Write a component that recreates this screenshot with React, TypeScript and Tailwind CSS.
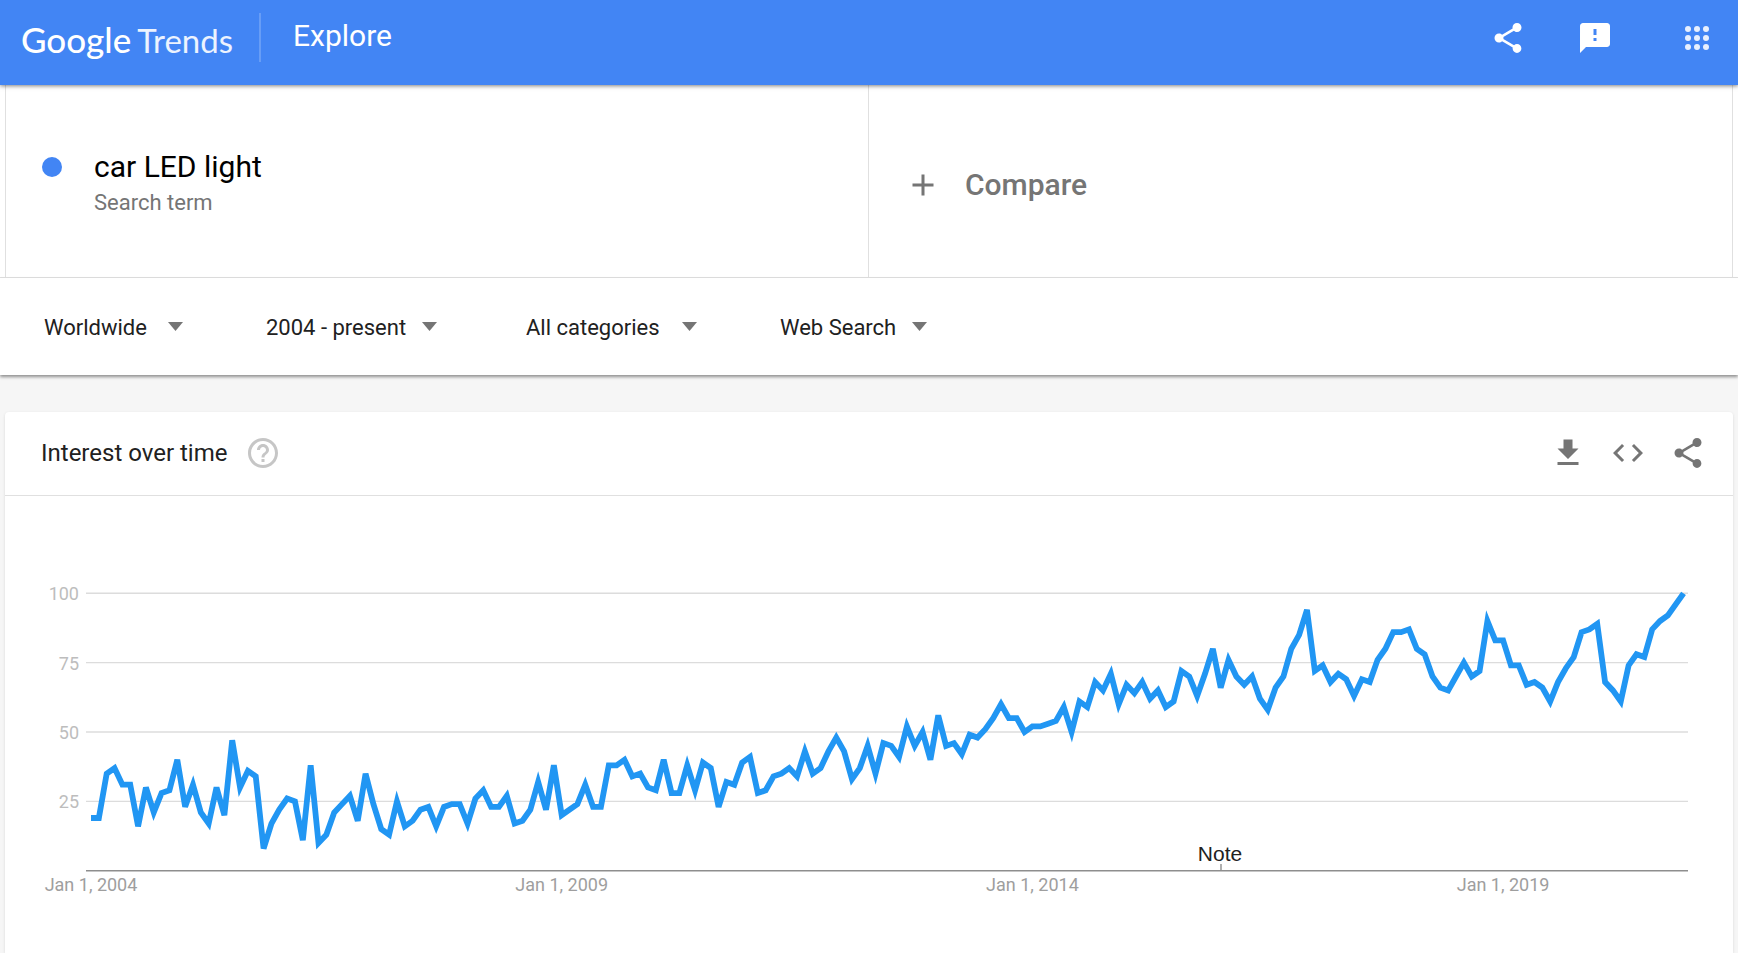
import { MdAdd, MdCode, MdFeedback, MdFileDownload, MdHelpOutline, MdShare } from "react-icons/md";

// Monthly interest, January 2004 to December 2020
const interest = [
  19, 19, 35, 37, 31, 31, 16, 30, 21, 28, 29, 40,
  23, 31, 21, 17, 30, 20, 47, 30, 36, 34, 8, 17,
  22, 26, 25, 11, 38, 10, 13, 21, 24, 27, 18, 35,
  24, 15, 13, 25, 16, 18, 22, 23, 16, 23, 24, 24,
  17, 26, 29, 23, 23, 27, 17, 18, 22, 32, 22, 38,
  20, 22, 24, 31, 23, 23, 38, 38, 40, 34, 35, 30,
  29, 40, 28, 28, 38, 29, 39, 37, 23, 32, 31, 39,
  41, 28, 29, 34, 35, 37, 34, 43, 35, 37, 43, 48,
  43, 33, 37, 45, 35, 46, 45, 41, 52, 45, 50, 40,
  56, 45, 46, 42, 49, 48, 51, 55, 60, 55, 55, 50,
  52, 52, 53, 54, 59, 50, 61, 59, 68, 65, 71, 60,
  67, 64, 68, 62, 65, 59, 61, 72, 70, 63, 71, 80,
  66, 76, 70, 67, 70, 62, 58, 66, 70, 80, 85, 94,
  72, 74, 68, 71, 69, 63, 69, 68, 76, 80, 86, 86,
  87, 80, 78, 70, 66, 65, 70, 75, 70, 72, 90, 83,
  83, 74, 74, 67, 68, 66, 61, 68, 73, 77, 86, 87,
  89, 68, 65, 61, 74, 78, 77, 87, 90, 92, 96, 100,
];

const filters = [
  { id: "geo", label: "Region", value: "Worldwide", cell: "w-[222px]", box: "w-[139px]" },
  { id: "time", label: "Time range", value: "2004 - present", cell: "w-[260px]", box: "w-[171px]" },
  { id: "category", label: "Category", value: "All categories", cell: "w-[254px]", box: "w-[171px]" },
  { id: "property", label: "Search type", value: "Web Search", cell: "w-[222px]", box: "w-[147px]" },
];

const xAxis = [
  { month: 0, label: "Jan 1, 2004" },
  { month: 60, label: "Jan 1, 2009" },
  { month: 120, label: "Jan 1, 2014" },
  { month: 180, label: "Jan 1, 2019" },
];

const toX = (month: number) => 86 + month * 7.845;
const toY = (value: number) => 374.7 - value * 2.774;

function AppsIcon() {
  return (
    <svg viewBox="0 0 24 24" className="size-6" fill="#fff" fillOpacity={0.88} aria-hidden="true">
      {[3, 12, 21].map((cy) => [3, 12, 21].map((cx) => <circle key={`${cx}-${cy}`} cx={cx} cy={cy} r={3} />))}
    </svg>
  );
}

function Header() {
  return (
    <header className="relative z-10 flex h-[85px] items-start bg-[#4285f4] px-[21px] pt-[13px] text-white shadow-[0_1px_4px_rgba(0,0,0,0.5)]">
      <a href="#" className="flex h-[49px] items-baseline gap-[6px] pt-[6px] font-['Lato',sans-serif] leading-[40px]">
        <span className="text-[35px] font-medium">Google</span>
        <span className="text-[33px] text-white/90">Trends</span>
      </a>
      <div className="ml-[26px] h-[49px] w-[2px] bg-white/20" />
      <h1 className="ml-8 pt-[5px] text-[30px] leading-[36px]">Explore</h1>
      <div className="ml-auto flex items-center pt-[7px]">
        <button type="button" aria-label="Share" className="mr-[51px]">
          <MdShare className="size-9" />
        </button>
        <button type="button" aria-label="Send feedback" className="mr-[72px]">
          <MdFeedback className="size-9" />
        </button>
        <button type="button" aria-label="Google apps" className="mr-[8px]">
          <AppsIcon />
        </button>
      </div>
    </header>
  );
}

function Terms() {
  return (
    <section className="border-b border-[#e0e0e0] bg-white px-[5px]">
      <div className="grid h-48 grid-cols-2 border-x border-[#e0e0e0]">
        <div className="flex items-start border-r border-[#e0e0e0] pl-9 pt-[62px]">
          <span className="mt-[10px] size-5 rounded-full bg-[#4285f4]" />
          <div className="ml-8">
            <p className="text-[30px] leading-[40px] text-black">car LED light</p>
            <p className="text-[22px] leading-[32px] text-[#757575]">Search term</p>
          </div>
        </div>
        <button
          type="button"
          className="flex items-center gap-6 pl-9 pt-[7px] text-[30px] font-medium text-[#757575]"
        >
          <MdAdd className="size-9" />
          Compare
        </button>
      </div>
    </section>
  );
}

function Filters() {
  return (
    <section className="flex h-[97px] items-center bg-white pl-11 pt-[2px] shadow-[0_2px_3px_rgba(0,0,0,0.42)]">
      {filters.map((f) => (
        <div key={f.id} className={f.cell}>
          <div className={`relative ${f.box}`}>
            <select
              id={f.id}
              aria-label={f.label}
              defaultValue={f.value}
              className="w-full appearance-none bg-transparent text-[22px] leading-[32px] text-[#212121] outline-none"
            >
              <option>{f.value}</option>
            </select>
            <svg viewBox="0 0 15 9" className="pointer-events-none absolute right-0 top-[10px] w-[15px]" aria-hidden="true">
              <path d="M0 0h15L7.5 9z" fill="#757575" />
            </svg>
          </div>
        </div>
      ))}
    </section>
  );
}

function Chart() {
  const points = interest.map((value, month) => `${toX(month)},${toY(value)}`).join(" ");

  return (
    <svg viewBox="0 0 1728 440" className="block h-auto w-full" role="img" aria-label="Interest over time">
      {[25, 50, 75, 100].map((tick) => (
        <g key={tick}>
          <line x1={81} x2={1683} y1={toY(tick)} y2={toY(tick)} stroke="#dcdcdc" strokeWidth={1.4} />
          <text x={74} y={toY(tick) + 7} textAnchor="end" fontSize={18} fill="#bdbdbd">
            {tick}
          </text>
        </g>
      ))}
      <line x1={81} x2={1683} y1={374.7} y2={374.7} stroke="#8e8e8e" strokeWidth={1.4} />
      <line x1={1216} x2={1216} y1={368} y2={375} stroke="#8e8e8e" strokeWidth={1.4} />
      <text x={1215} y={365} textAnchor="middle" fontSize={21} fill="#212121" fontFamily="Liberation Sans, sans-serif">
        Note
      </text>
      {xAxis.map((tick) => (
        <text key={tick.month} x={toX(tick.month)} y={395} textAnchor="middle" fontSize={18} fill="#9e9e9e">
          {tick.label}
        </text>
      ))}
      <polyline points={points} fill="none" stroke="#2196f3" strokeWidth={5.8} />
    </svg>
  );
}

export default function App() {
  return (
    <div className="flex min-h-screen flex-col bg-[#f6f6f6] font-['Roboto',sans-serif]">
      <Header />
      <Terms />
      <Filters />
      <main className="mt-[37px] flex flex-1 flex-col px-[5px]">
        <section className="flex-1 rounded-t bg-white shadow-[0_1px_3px_rgba(0,0,0,0.12)]">
          <div className="flex h-[84px] items-center border-b border-[#e0e0e0] pb-[2px] pl-9 pr-[27px]">
            <h2 className="text-[24px] leading-[32px] text-[#212121]">Interest over time</h2>
            <button type="button" aria-label="Help" className="ml-[18px] text-[#c6c6c6]">
              <MdHelpOutline className="size-9" />
            </button>
            <div className="ml-auto flex gap-6 text-[#757575]">
              <button type="button" aria-label="Download CSV">
                <MdFileDownload className="size-9" />
              </button>
              <button type="button" aria-label="Embed">
                <MdCode className="size-9" />
              </button>
              <button type="button" aria-label="Share chart">
                <MdShare className="size-9" />
              </button>
            </div>
          </div>
          <Chart />
        </section>
      </main>
    </div>
  );
}
